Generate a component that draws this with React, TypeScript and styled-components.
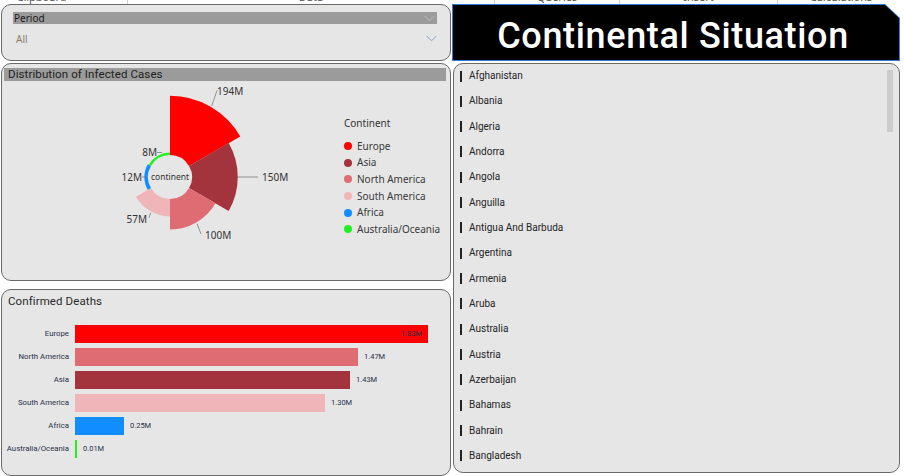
import React from "react";
import styled, { createGlobalStyle } from "styled-components";

const GlobalStyle = createGlobalStyle`
  html, body { margin: 0; padding: 0; background: #ffffff; }
  body { width: 904px; height: 476px; overflow: hidden; font-family: Roboto, "DejaVu Sans", sans-serif; }
  * { box-sizing: border-box; }
`;

const Page = styled.div`
  width: 904px;
  height: 476px;
  display: flex;
  flex-direction: column;
  background: #fff;
`;

const Ribbon = styled.div`
  height: 4px;
  overflow: hidden;
  display: flex;
  background: #fff;
`;

const RibbonGroup = styled.div<{ $w: number; $pr?: number; $last?: boolean }>`
  width: ${(p) => p.$w}px;
  flex: none;
  display: flex;
  justify-content: center;
  padding-right: ${(p) => p.$pr ?? 0}px;
  border-right: ${(p) => (p.$last ? "none" : "1px solid #cfcfcf")};
`;

const RibbonLabel = styled.span`
  font: 11px/12px "Noto Sans", sans-serif;
  color: #555;
  margin-top: -9px;
  white-space: nowrap;
`;

const Main = styled.div`
  flex: 1;
  display: grid;
  grid-template-columns: 450px 448px;
  column-gap: 1px;
  padding-left: 1px;
`;

const Column = styled.div`
  display: flex;
  flex-direction: column;
`;

const Card = styled.div<{ $h: number; $mt?: number; $ml?: number }>`
  height: ${(p) => p.$h}px;
  margin-top: ${(p) => p.$mt ?? 0}px;
  margin-left: ${(p) => p.$ml ?? 0}px;
  background: #e6e6e6;
  border: 1px solid #6a6a6a;
  border-radius: 10px;
  position: relative;
  overflow: hidden;
`;

/* ---------- Period slicer ---------- */
const SlicerCard = styled(Card)`
  padding: 7px 13px 0 11px;
`;

const SlicerHeader = styled.div`
  height: 12px;
  background: #9b9b9b;
  display: flex;
  align-items: center;
  justify-content: space-between;
  padding: 0 2px 0 1px;
  font: 10px/12px "Noto Sans", sans-serif;
  color: #1c1c1c;
`;

const SlicerValue = styled.div`
  height: 17px;
  margin-top: 6px;
  display: flex;
  align-items: center;
  justify-content: space-between;
  padding: 0 0 0 3px;
  font: 10px/12px "Noto Sans", sans-serif;
  color: #8a7d68;
`;

const Chevron = ({ color }: { color: string }) => (
  <svg width="11" height="7" viewBox="0 0 11 7">
    <path d="M0.5 0.8 L5.5 5.8 L10.5 0.8" fill="none" stroke={color} strokeWidth="1" />
  </svg>
);

/* ---------- Distribution card ---------- */
const DistCard = styled(Card)`
  padding: 4px 4px 0 2px;
  display: flex;
  flex-direction: column;
`;

const TitleBar = styled.div`
  height: 13px;
  background: #9b9b9b;
  padding-left: 4px;
  font: 11.5px/13px Roboto, sans-serif;
  color: #1e1e1e;
  letter-spacing: 0.1px;
`;

const DistBody = styled.div`
  flex: 1;
  display: flex;
  margin-left: -2px;
`;

const Legend = styled.div`
  padding-top: 36px;
  padding-left: 4px;
  display: flex;
  flex-direction: column;
`;

const LegendTitle = styled.div`
  font: 10px/13px "Noto Sans", sans-serif;
  color: #333;
  margin-bottom: 8px;
`;

const LegendItem = styled.div`
  display: flex;
  align-items: center;
  height: 16.6px;
  font: 10px/13px "Noto Sans", sans-serif;
  color: #3a3a3a;
`;

const Dot = styled.span<{ $c: string }>`
  width: 8px;
  height: 8px;
  border-radius: 50%;
  background: ${(p) => p.$c};
  margin-right: 5px;
  flex: none;
`;

/* ---------- Deaths card ---------- */
const DeathsCard = styled(Card)`
  padding: 4px 0 0 0;
`;

const PlainTitle = styled.div`
  height: 14px;
  padding-left: 6px;
  font: 11.5px/14px Roboto, sans-serif;
  color: #2a2a2a;
  letter-spacing: 0.1px;
`;

const BarGrid = styled.div`
  margin-top: 17px;
  display: grid;
  grid-template-columns: 67px 353px;
  column-gap: 6px;
  row-gap: 5px;
  grid-auto-rows: 18px;
`;

const BarLabel = styled.div`
  font: 7.8px/18px Roboto, sans-serif;
  color: #27304a;
  text-align: right;
  white-space: nowrap;
`;

const BarTrack = styled.div`
  display: flex;
  align-items: center;
`;

const Bar = styled.div<{ $c: string }>`
  height: 18px;
  background: ${(p) => p.$c};
  flex: none;
  display: flex;
  align-items: center;
  justify-content: flex-end;
  font: 7.5px/18px Roboto, sans-serif;
  color: #27304a;
`;

const BarValue = styled.span`
  margin-left: 6px;
  font: 7.5px/18px Roboto, sans-serif;
  color: #27304a;
`;

/* ---------- Title ---------- */
const TitleFrame = styled.div`
  height: 57px;
  background: #2f7ad8;
  padding: 1px;
  clip-path: polygon(0 0, calc(100% - 15px) 0, 100% 14px, 100% 100%, 0 100%);
`;

const TitleInner = styled.div`
  height: 100%;
  background: #000;
  clip-path: polygon(0 0, calc(100% - 14px) 0, 100% 13px, 100% 100%, 0 100%);
  display: flex;
  align-items: center;
  justify-content: center;
  padding: 7px 6px 0 0;
`;

const TitleText = styled.h1`
  margin: 0;
  font: 500 36px/40px Roboto, sans-serif;
  color: #fff;
  letter-spacing: 0.65px;
`;

/* ---------- Country list ---------- */
const ListCard = styled(Card)`
  padding: 1px 0 0 6px;
`;

const ListRow = styled.div`
  height: 25.33px;
  display: flex;
  align-items: flex-start;
  padding-top: 5px;
`;

const Marker = styled.span`
  width: 2px;
  height: 11px;
  background: #222;
  margin-top: 0.5px;
  margin-right: 7px;
`;

const RowText = styled.span`
  font: 10px/12px Roboto, sans-serif;
  color: #252525;
`;

const ScrollThumb = styled.div`
  position: absolute;
  top: 6px;
  right: 6px;
  width: 6px;
  height: 62px;
  background: #cbcbcb;
`;

const continents = [
  { name: "Europe", color: "#fe0000", value: 194 },
  { name: "Asia", color: "#a3333d", value: 150 },
  { name: "North America", color: "#df6b73", value: 100 },
  { name: "South America", color: "#f0b5b8", value: 57 },
  { name: "Africa", color: "#118dff", value: 12 },
  { name: "Australia/Oceania", color: "#22ee22", value: 8 },
];

const deaths = [
  { name: "Europe", color: "#fe0000", w: 353, label: "1.83M", inside: true },
  { name: "North America", color: "#df6b73", w: 283, label: "1.47M" },
  { name: "Asia", color: "#a3333d", w: 275, label: "1.43M" },
  { name: "South America", color: "#f0b5b8", w: 250, label: "1.30M" },
  { name: "Africa", color: "#118dff", w: 49, label: "0.25M" },
  { name: "Australia/Oceania", color: "#22ee22", w: 2, label: "0.01M" },
];

const countries = [
  "Afghanistan", "Albania", "Algeria", "Andorra", "Angola", "Anguilla",
  "Antigua And Barbuda", "Argentina", "Armenia", "Aruba", "Australia",
  "Austria", "Azerbaijan", "Bahamas", "Bahrain", "Bangladesh",
];

const CX = 168;
const CY = 96;
const R0 = 22;

const pt = (a: number, r: number) => {
  const rad = (a * Math.PI) / 180;
  return `${(CX + r * Math.sin(rad)).toFixed(2)} ${(CY - r * Math.cos(rad)).toFixed(2)}`;
};

const sector = (a0: number, a1: number, r1: number) =>
  `M ${pt(a0, r1)} A ${r1} ${r1} 0 0 1 ${pt(a1, r1)} L ${pt(a1, R0)} A ${R0} ${R0} 0 0 0 ${pt(a0, R0)} Z`;

const labelStyle = { fontFamily: '"Noto Sans", sans-serif', fontSize: 10, fill: "#333" };

const Donut = () => (
  <svg width="338" height="199" viewBox="0 0 338 199">
    {continents.map((c, i) => (
      <path key={c.name} d={sector(i * 60, (i + 1) * 60, R0 + 0.305 * c.value)} fill={c.color} />
    ))}
    <g stroke="#7a7a7a" strokeWidth="0.8">
      <line x1="209.7" y1="25" x2="215" y2="9.5" />
      <line x1="235" y1="96" x2="256" y2="96" />
      <line x1="195" y1="142.7" x2="199" y2="153" />
      <line x1="148.7" y1="131.7" x2="147" y2="136.7" />
      <line x1="140" y1="96" x2="144" y2="96" />
      <line x1="155" y1="71.5" x2="160" y2="71.5" />
    </g>
    <text x="215" y="13.5" {...labelStyle}>194M</text>
    <text x="260" y="99.5" {...labelStyle}>150M</text>
    <text x="203" y="157.5" {...labelStyle}>100M</text>
    <text x="145" y="141.5" textAnchor="end" {...labelStyle}>57M</text>
    <text x="140" y="99.5" textAnchor="end" {...labelStyle}>12M</text>
    <text x="155" y="75" textAnchor="end" {...labelStyle}>8M</text>
    <text x={CX} y={CY + 3} textAnchor="middle" {...labelStyle} fontSize={8.5}>continent</text>
  </svg>
);

export default function App() {
  return (
    <>
      <GlobalStyle />
      <Page>
        <Ribbon>
          <RibbonGroup $w={128} $pr={44}><RibbonLabel>Clipboard</RibbonLabel></RibbonGroup>
          <RibbonGroup $w={367}><RibbonLabel>Data</RibbonLabel></RibbonGroup>
          <RibbonGroup $w={125}><RibbonLabel>Queries</RibbonLabel></RibbonGroup>
          <RibbonGroup $w={158}><RibbonLabel>Insert</RibbonLabel></RibbonGroup>
          <RibbonGroup $w={126} $last><RibbonLabel>Calculations</RibbonLabel></RibbonGroup>
        </Ribbon>
        <Main>
          <Column>
            <SlicerCard $h={57}>
              <SlicerHeader>
                <span>Period</span>
                <Chevron color="#bdbdbd" />
              </SlicerHeader>
              <SlicerValue>
                <span>All</span>
                <Chevron color="#8aa0b8" />
              </SlicerValue>
            </SlicerCard>
            <DistCard $h={218} $mt={2}>
              <TitleBar>Distribution of Infected Cases</TitleBar>
              <DistBody>
                <Donut />
                <Legend>
                  <LegendTitle>Continent</LegendTitle>
                  {continents.map((c) => (
                    <LegendItem key={c.name}>
                      <Dot $c={c.color} />
                      {c.name}
                    </LegendItem>
                  ))}
                </Legend>
              </DistBody>
            </DistCard>
            <DeathsCard $h={187} $mt={8}>
              <PlainTitle>Confirmed Deaths</PlainTitle>
              <BarGrid>
                {deaths.map((d) => (
                  <React.Fragment key={d.name}>
                    <BarLabel>{d.name}</BarLabel>
                    <BarTrack>
                      <Bar $c={d.color} style={{ width: d.w, paddingRight: d.inside ? 6 : 0 }}>
                        {d.inside ? d.label : null}
                      </Bar>
                      {!d.inside && <BarValue>{d.label}</BarValue>}
                    </BarTrack>
                  </React.Fragment>
                ))}
              </BarGrid>
            </DeathsCard>
          </Column>
          <Column>
            <TitleFrame>
              <TitleInner>
                <TitleText>Continental Situation</TitleText>
              </TitleInner>
            </TitleFrame>
            <ListCard $h={410} $mt={2} $ml={1}>
              {countries.map((c) => (
                <ListRow key={c}>
                  <Marker />
                  <RowText>{c}</RowText>
                </ListRow>
              ))}
              <ScrollThumb />
            </ListCard>
          </Column>
        </Main>
      </Page>
    </>
  );
}
